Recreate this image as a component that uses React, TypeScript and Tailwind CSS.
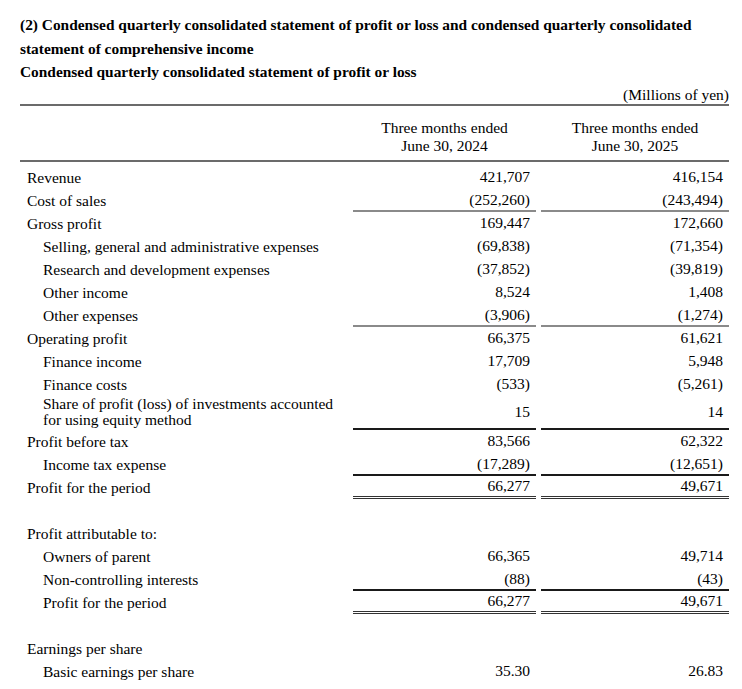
type Line = 'none' | 'gray' | 'black' | 'double';

type Row = {
  label: string[];
  indent?: boolean;
  a?: string;
  b?: string;
  line?: Line;
  spacer?: string;
};

const rows: Row[] = [
  { label: ['Revenue'], a: '421,707', b: '416,154' },
  { label: ['Cost of sales'], a: '(252,260)', b: '(243,494)', line: 'gray' },
  { label: ['Gross profit'], a: '169,447', b: '172,660' },
  { label: ['Selling, general and administrative expenses'], indent: true, a: '(69,838)', b: '(71,354)' },
  { label: ['Research and development expenses'], indent: true, a: '(37,852)', b: '(39,819)' },
  { label: ['Other income'], indent: true, a: '8,524', b: '1,408' },
  { label: ['Other expenses'], indent: true, a: '(3,906)', b: '(1,274)', line: 'gray' },
  { label: ['Operating profit'], a: '66,375', b: '61,621' },
  { label: ['Finance income'], indent: true, a: '17,709', b: '5,948' },
  { label: ['Finance costs'], indent: true, a: '(533)', b: '(5,261)' },
  {
    label: ['Share of profit (loss) of investments accounted', 'for using equity method'],
    indent: true,
    a: '15',
    b: '14',
    line: 'black',
  },
  { label: ['Profit before tax'], a: '83,566', b: '62,322' },
  { label: ['Income tax expense'], indent: true, a: '(17,289)', b: '(12,651)', line: 'black' },
  { label: ['Profit for the period'], a: '66,277', b: '49,671', line: 'double' },
  { label: [], spacer: 'h-[23px]' },
  { label: ['Profit attributable to:'] },
  { label: ['Owners of parent'], indent: true, a: '66,365', b: '49,714' },
  { label: ['Non-controlling interests'], indent: true, a: '(88)', b: '(43)', line: 'black' },
  { label: ['Profit for the period'], indent: true, a: '66,277', b: '49,671', line: 'double' },
  { label: [], spacer: 'h-[23px]' },
  { label: ['Earnings per share'] },
  { label: ['Basic earnings per share'], indent: true, a: '35.30', b: '26.83' },
];

const lineClass: Record<Line, string> = {
  none: 'border-b-2 border-transparent',
  gray: 'border-b-2 border-[#8a8a8a]',
  black: 'border-b-2 border-[#1a1a1a]',
  double: 'border-b-[3px] border-double border-[#333]',
};

function Value({ v, line, first }: { v?: string; line: Line; first: boolean }) {
  return (
    <div className={first ? 'flex pr-[5px]' : 'flex'}>
      <div className={`flex flex-1 items-center justify-end pr-[6px] ${lineClass[line]}`}>{v}</div>
    </div>
  );
}

export default function App() {
  return (
    <div className="min-h-[689px] w-[742px] bg-white pl-[20px] pr-[13px] text-[15.5px] text-black [font-family:'Liberation_Serif','Times_New_Roman',serif]">
      <div className="pt-[13px] text-[15.4px] font-bold leading-[23.5px]">
        <p>(2) Condensed quarterly consolidated statement of profit or loss and condensed quarterly consolidated</p>
        <p>statement of comprehensive income</p>
        <p>Condensed quarterly consolidated statement of profit or loss</p>
      </div>
      <p className="pt-[2px] text-right leading-[18px]">(Millions of yen)</p>

      <div className="grid grid-cols-[333px_1fr_1fr] border-y-2 border-[#6b6b6b] pb-[5px] pt-[13px] leading-[18px]">
        <div />
        <div className="pr-[5px] text-center">
          <p>Three months ended</p>
          <p>June 30, 2024</p>
        </div>
        <div className="text-center">
          <p>Three months ended</p>
          <p>June 30, 2025</p>
        </div>
      </div>

      <div className="mt-[4px]">
        {rows.map((r, i) => {
          if (r.spacer) return <div key={i} className={r.spacer} />;
          const line = r.line ?? 'none';
          const multi = r.label.length > 1;
          return (
            <div key={i} className={`grid grid-cols-[333px_1fr_1fr] ${multi ? 'leading-[16px]' : 'leading-[17px]'}`}>
              <div className={`${r.indent ? 'pl-[23px]' : 'pl-[7px]'} ${multi ? '' : 'pb-[1px] pt-[3px]'} border-b-2 border-transparent`}>
                {r.label.map((t) => (
                  <p key={t}>{t}</p>
                ))}
              </div>
              <Value v={r.a} line={line} first />
              <Value v={r.b} line={line} first={false} />
            </div>
          );
        })}
      </div>
    </div>
  );
}
